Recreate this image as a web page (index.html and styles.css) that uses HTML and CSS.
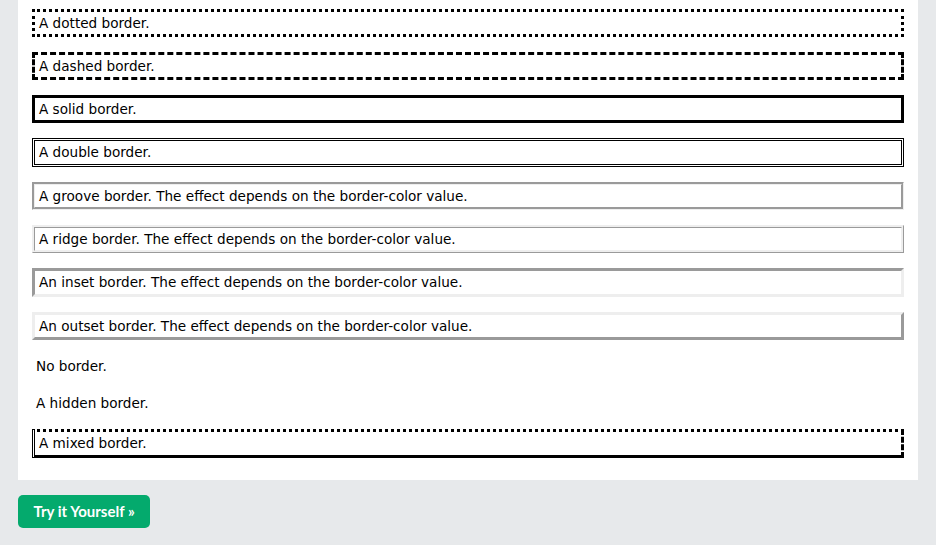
FILE: index.html
```html
<!DOCTYPE html>
<html>
<head>
<meta charset="utf-8">
<link rel="stylesheet" href="styles.css">
</head>
<body>
<div class="page">
  <div class="example">
    <p class="b dotted">A dotted border.</p>
    <p class="b dashed">A dashed border.</p>
    <p class="b solid">A solid border.</p>
    <p class="b double">A double border.</p>
    <p class="b groove">A groove border. The effect depends on the border-color value.</p>
    <p class="b ridge">A ridge border. The effect depends on the border-color value.</p>
    <p class="b inset">An inset border. The effect depends on the border-color value.</p>
    <p class="b outset">An outset border. The effect depends on the border-color value.</p>
    <p class="none">No border.</p>
    <p class="hidden">A hidden border.</p>
    <p class="b mix">A mixed border.</p>
  </div>
  <a class="try-btn" href="#">Try it Yourself »</a>
</div>
</body>
</html>
```
FILE: styles.css
```css
html, body {
  margin: 0;
  padding: 0;
  background: #e7e9eb;
}
.page {
  padding: 0 18px;
  font-family: "DejaVu Sans", Verdana, sans-serif;
  font-size: 13.6px;
  line-height: 22.3px;
  color: #000;
}
.example {
  background: #fff;
  padding: 1px 14px 7px;
  margin-top: -1px;
  display: flow-root;
}
.example p {
  margin: 15px 0;
  padding: 0 4px;
}
.example p:first-child {
  margin-top: 8.5px;
}
.b {
  border-width: 3px;
  border-color: #000;
}
.dotted { border-style: dotted; }
.dashed { border-style: dashed; }
.solid { border-style: solid; }
.double { border-style: double; }
.groove { border-style: groove; border-color: #eeeeee; }
.ridge { border-style: ridge; border-color: #eeeeee; }
.inset { border-style: inset; border-color: #eeeeee; }
.outset { border-style: outset; border-color: #eeeeee; }
.none { border-style: none; }
.hidden { border-style: hidden; }
.mix { border-style: dotted dashed solid double; }
.try-btn {
  display: inline-block;
  margin-top: 15px;
  background: #04aa6d;
  color: #fff;
  text-decoration: none;
  font-family: Lato, "Open Sans", sans-serif;
  font-weight: 700;
  font-size: 15px;
  line-height: 33px;
  padding: 0 15.5px;
  border-radius: 5px;
}
```
